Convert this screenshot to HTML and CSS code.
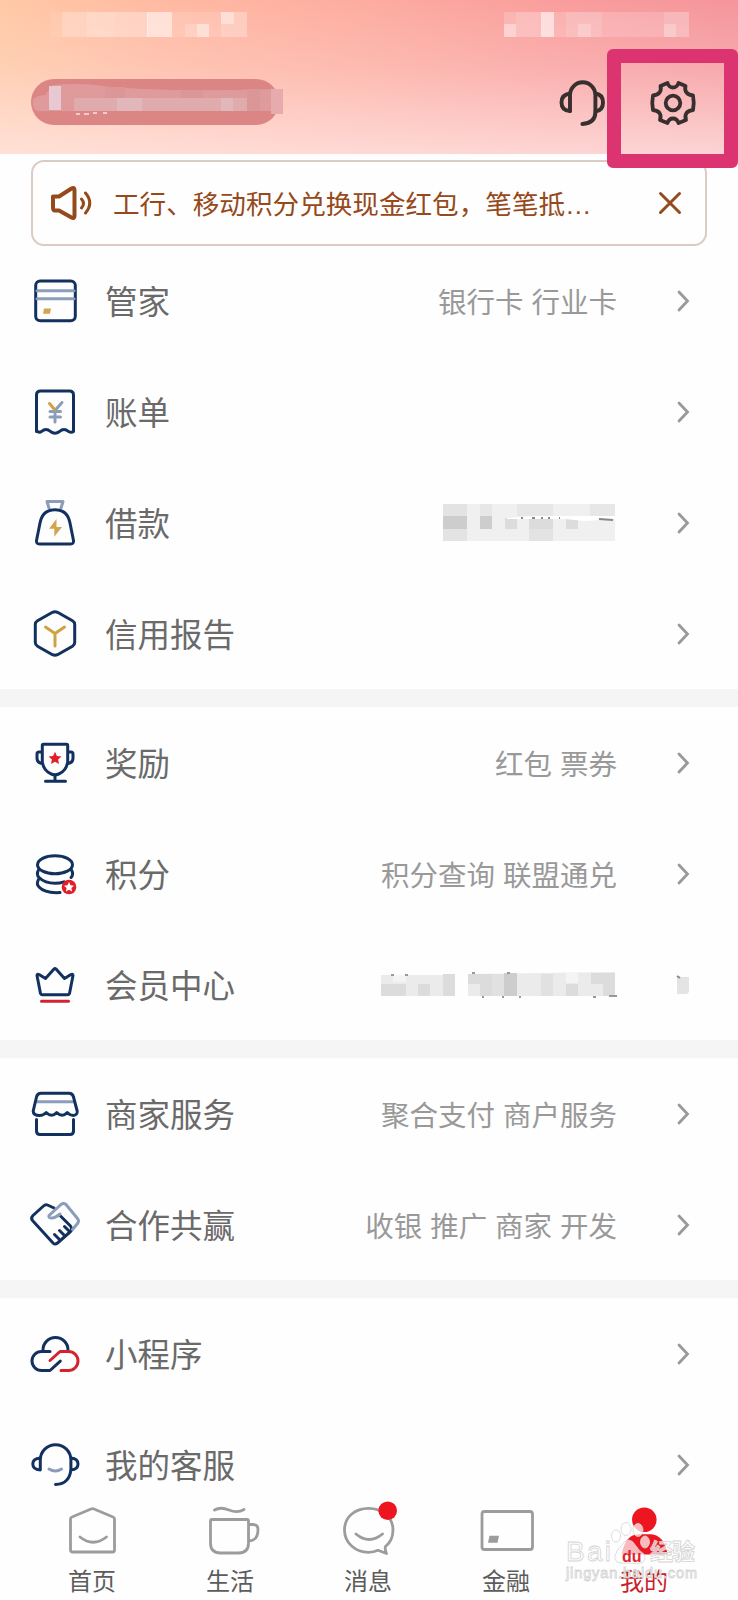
FILE: index.html
```html
<!DOCTYPE html>
<html lang="zh-CN">
<head>
<meta charset="utf-8">
<title>我的</title>
<link rel="stylesheet" href="styles.css">
</head>
<body>
<div class="app">
  <header class="header">
    <div class="status">
      <svg class="mosaic" width="200" height="26" viewBox="0 0 200 26">
        <g fill="#fff"><path opacity=".08" d="M0 0h65v25H0z"/><path opacity=".2" d="M12 0h86v25H12z"/><path opacity=".15" d="M37 0h61v25H37z"/><path opacity=".55" d="M97 0h25v25H97z"/><path opacity=".14" d="M122 0h75v25h-75z"/><path opacity=".35" d="M147 12h12v13h-12zM171 0h13v12h-13z"/><path opacity=".18" d="M135 12h24v13h-24zM171 0h26v25h-26z"/></g>
      </svg>
      <svg class="mosaic" width="186" height="26" viewBox="0 0 186 26">
        <g fill="#fff"><path opacity=".18" d="M0 0h185v25H0z"/><path opacity=".38" d="M0 12h12v13H0z"/><path opacity=".5" d="M37 0h13v25H37z"/><path opacity=".12" d="M12 0h38v25H12zM62 0h36v25H62zM160 0h25v25h-25z"/><path opacity=".22" d="M74 12h13v13H74zM160 12h12v13h-12z"/></g>
      </svg>
    </div>
    <div class="topbar">
      <div class="account">
        <svg class="account-mask" width="254" height="46" viewBox="0 0 254 46">
          <path fill="#df9a9b" d="M2 20q6-4 12-4L22 6q30-3 58 2 60 5 168 2v22H12Q0 34 2 20z"/>
          <path fill="#e0abad" d="M43 19h173v13H43z"/><path fill="#e8c9d2" d="M18 7h12v24H18z"/><path fill="#e2b7bb" d="M86 19h25v13H86zM190 19h12v13h-12z"/>
          <path fill="#db9697" d="M216 10h13v22h-13zM74 8h20v11H74zM150 11h22v8h-22z"/><path fill="#e8abad" d="M240 10h12v25h-12z"/>
          <path fill="none" stroke="#fbe3e2" stroke-width="1.3" d="M45 35h4m4 0h5m4-1h4m6 0h4"/>
        </svg>
      </div>
      <div class="top-actions">
        <svg class="top-icon" width="50" height="50" viewBox="0 0 50 50">
          <g fill="none" stroke="#38302e" stroke-width="3.900" stroke-linecap="round" stroke-linejoin="round"><path d="M13 33V17a12.700 12.700 0 0 1 25.400 0v17q0 11-13 12"/><path d="M13 15.500Q4.500 16.500 4.500 24.500T13 33M38.500 15.500q7.500 1 7.500 9t-7.500 9"/></g>
        </svg>
        <div class="settings">
          <svg class="top-icon" width="50" height="50" viewBox="0 0 50 50">
            <g fill="none" stroke="#38302e" stroke-width="3.800" stroke-linejoin="round"><path d="M19.500 5Q21 9.500 25 9.500Q29 9.500 30.500 5L37.500 8Q36.500 12.500 38.500 14.500Q40.500 17 45 17.500Q46.500 25 45 32Q40.500 32.500 38.500 35Q36.500 38 38 42L30.500 45Q29 40.500 25 40.500Q21 40.500 19.500 45L12 42Q13.500 38 11.500 35Q9.500 32.500 5 32Q3.500 25 5 17.500Q9.500 17 11.500 14.500Q13.500 12.500 12.500 8Z"/><circle cx="25" cy="25" r="7.300"/></g>
          </svg>
        </div>
      </div>
    </div>
  </header>

  <div class="notice">
    <svg class="notice-icon" width="44" height="36" viewBox="0 0 44 36">
      <g fill="none" stroke="#96491a" stroke-width="4" stroke-linejoin="round" stroke-linecap="round"><path d="M3 11.500h6L21.500 3.500q3-1.500 3 1.500v26q0 3-3 1.500L9 25.500H5q-2 0-2-3z"/><path stroke-width="3" d="M31.500 14q4 4.500 0 9M35.500 8q8.500 10 0 20"/></g>
    </svg>
    <p class="notice-text">工行、移动积分兑换现金红包，笔笔抵<span class="dots">…</span></p>
    <svg class="notice-close" width="24" height="24" viewBox="0 0 24 24"><path d="M2.500 2.500l19 19m0-19l-19 19" stroke="#96491a" stroke-width="3" stroke-linecap="round"/></svg>
  </div>

  <main class="list">
    <section class="group">
      <div class="row">
        <svg class="icon" viewBox="0 0 60 60"><rect class="navy" x="10.700" y="10.100" width="39.600" height="39.600" rx="4.500"/><path class="slate" d="M12 19.800h37M12 27.800h37"/><path class="gold-fill" d="M19 37.500h7l-1 5.300h-7z"/></svg>
        <span class="label">管家</span><span class="value">银行卡 行业卡</span>
        <svg class="chevron" viewBox="0 0 14 22"><path d="M3 2l8.500 9L3 20"/></svg>
      </div>
      <div class="row">
        <svg class="icon" viewBox="0 0 60 60"><path class="navy" d="M11.500 49.500V13q0-4 4-4h29q4 0 4 4v36.500q-2 1.500-5 0-4.500-4-9 0-4.500 3.500-9 0-4.500-4-9 0-2 1.500-4 0z"/><path class="slate" d="M30 29v11M25 29.500h10.500M25 35h10.500M30 28.500l7-8"/><path class="slate gold" d="M24.500 21.500l5 6"/></svg>
        <span class="label">账单</span>
        <svg class="chevron" viewBox="0 0 14 22"><path d="M3 2l8.500 9L3 20"/></svg>
      </div>
      <div class="row">
        <svg class="icon" viewBox="0 0 60 60"><path class="slate" d="M24 15l-2-6.500h16L36 15"/><path class="navy" d="M11.500 47.500L15 30Q17.500 16.800 30 16.800T45 30l3.500 17.500q.5 3.500-3 3.500h-31q-3.500 0-3-3.500z"/><path class="gold-fill" d="M31.500 26l-7.500 9.800h5.300v8L37 34h-5.500z"/></svg>
        <span class="label">借款</span>
        <span class="value">
          <svg class="mosaic-value" width="174" height="38" viewBox="0 0 174 38"><path fill="#f0f0f0" d="M0 0h172v37H0z"/><path fill="#e3e3e3" d="M0 0h24v37H0zM86 12h24v25H86z"/><path fill="#cdcdcd" d="M0 12h24v13H0zM37 12h12v13H37z"/><path fill="#dcdcdc" d="M62 14h12v11H62zM86 15h24v10H86zM123 13h12v12h-12z"/><path fill="#e7e7e7" d="M37 0h12v12H37zM74 0h36v12H74zM147 0h25v12h-25z"/><path fill="#fff" d="M64 14l28-2h80v3l-30 2-20-2H64z"/><path stroke="#888" stroke-width="2" d="M78 14h2m9 0h3m6 0h2m5 0h2m9 0h1m39 1l14 1"/></svg>
        </span>
        <svg class="chevron" viewBox="0 0 14 22"><path d="M3 2l8.500 9L3 20"/></svg>
      </div>
      <div class="row">
        <svg class="icon" viewBox="0 0 60 60"><path class="navy" d="M27.500 8.300q2.500-1.300 5 0l15 8.500q2.200 1.300 2.200 3.700v18q0 2.400-2.200 3.700l-15 8.500q-2.500 1.300-5 0l-15-8.500q-2.200-1.300-2.200-3.700v-18q0-2.400 2.200-3.700z"/><path class="slate gold" d="M20.500 23l9.500 6.500 9.500-6.500M30 29.500v12.500"/></svg>
        <span class="label">信用报告</span>
        <svg class="chevron" viewBox="0 0 14 22"><path d="M3 2l8.500 9L3 20"/></svg>
      </div>
    </section>

    <section class="group">
      <div class="row">
        <svg class="icon" viewBox="0 0 60 60"><path class="navy" d="M18.500 11.300h23q1.200 0 1.200 1.200V29q-1.500 9-9 12-3.700 1.500-7.400 0-7.500-3-9-12V12.500q0-1.200 1.200-1.200zM17 19h-3q-2 0-2 2v4q0 5 5.500 5.500M43 19h3q2 0 2 2v4q0 5-5.500 5.500M30 42v6M20.500 48.300h20"/><path class="red-fill" d="M30 18.800l1.900 4.200 4.600.5-3.400 3.100.9 4.500-4-2.300-4 2.300.9-4.500-3.400-3.100 4.600-.5z"/></svg>
        <span class="label">奖励</span><span class="value">红包 票券</span>
        <svg class="chevron" viewBox="0 0 14 22"><path d="M3 2l8.500 9L3 20"/></svg>
      </div>
      <div class="row">
        <svg class="icon" viewBox="0 0 60 60"><ellipse class="navy" cx="30" cy="20.700" rx="17.500" ry="9"/><path class="navy" d="M13.500 26q-2.500 4.500.5 7.500 6 5.800 16 5.800 5 0 9-1.500M46.500 26q2.500 4.500-.5 7.500M13.500 35.500q-2.500 4.500.5 7.500 6 6.500 21 5.500"/><circle class="red-fill" cx="44" cy="43" r="7.300"/><path fill="#fff" d="M44 38l1.500 3.300 3.500.4-2.600 2.400.7 3.500-3.100-1.800-3.100 1.800.7-3.500-2.600-2.400 3.500-.4z"/></svg>
        <span class="label">积分</span><span class="value">积分查询 联盟通兑</span>
        <svg class="chevron" viewBox="0 0 14 22"><path d="M3 2l8.500 9L3 20"/></svg>
      </div>
      <div class="row">
        <svg class="icon" viewBox="0 0 60 60"><path class="navy" d="M12 20.500q0-2 2-1l6.500 4 8.500-9.500q1-1 2 0l8.500 9.500 6.500-4q2-1 2 1l-3.500 18q-.3 1.200-1.500 1.200H17q-1.200 0-1.500-1.200z"/><path class="red" d="M16.500 46.300h27"/></svg>
        <span class="label">会员中心</span>
        <span class="value">
          <svg class="mosaic-value" width="236" height="28" viewBox="0 0 236 28"><path fill="#ebebeb" d="M0 4h74V25H0zM87 3l147-2v24H87z"/><path fill="#dcdcdc" d="M0 13h25v12H0zM37 13h12v12H37zM62 3h12v22H62zM87 3h24v10H87zM99 13h12v12H99zM185 13h12v12h-12zM210 2h24v11h-24zM222 13h12v12h-12z"/><path fill="#cdcdcd" d="M123 2h13v23h-13z"/><path fill="#e1e1e1" d="M111 3h12v22h-12zM160 3h12v22h-12z"/><path fill="#f4f4f4" d="M12 4h13v7H12zM185 2h12v10h-12z"/><path stroke="#999" stroke-width="2" d="M10 4h3m11 0h3m64-2h3m32 0h3m-28 24h2m18 0h2m15 0h2m72 0h3m13-1h8"/></svg>
        </span>
        <svg class="chevron-mask" width="14" height="20" viewBox="0 0 14 20"><path fill="#e4e4e4" d="M1 2h12v15l-2 2H1z"/><path stroke="#888" stroke-width="2" d="M1 1l3 2"/></svg>
      </div>
    </section>

    <section class="group">
      <div class="row">
        <svg class="icon" viewBox="0 0 60 60"><path class="slate" d="M12 17.700h37"/><path class="navy" d="M11.500 13q.8-3.700 4.500-3.700h28q3.700 0 4.500 3.700l3.700 14q.5 4-4 4.500-3 0-6-3-5 5.500-10.500 0-5 5.500-10.500 0-3 3-6.500 3-6.500 0-6.500-4.500zM11.500 35.500V47q0 3.500 3.500 3.500h30q3.500 0 3.500-3.500V35.500"/></svg>
        <span class="label">商家服务</span><span class="value">聚合支付 商户服务</span>
        <svg class="chevron" viewBox="0 0 14 22"><path d="M3 2l8.500 9L3 20"/></svg>
      </div>
      <div class="row">
        <svg class="icon" viewBox="0 0 60 60"><path class="navy" d="M29 13l-6.500-3q-2-1-4 1L8 20.500q-2.500 2.500-.5 5L28 48q2 2 4.500 0L45 37q3-2.500.5-6L35.500 21"/><path class="slate" d="M47.500 34.500l5-6q2-2.500 0-5L41 9.500q-2.500-2-5 0l-12 11q-1 2.500 3 2.500 3 0 8-4"/><path class="navy" d="M29.500 39.500l4.500 4.500M34.500 35.500l4.500 4.500M39.500 31.500l4.500 4.500"/></svg>
        <span class="label">合作共赢</span><span class="value">收银 推广 商家 开发</span>
        <svg class="chevron" viewBox="0 0 14 22"><path d="M3 2l8.500 9L3 20"/></svg>
      </div>
    </section>

    <section class="group">
      <div class="row">
        <svg class="icon" viewBox="0 0 60 60"><path class="navy" d="M18 26a12.500 12.500 0 0 1 25 0M25 27.500h-8.500a9.500 9.500 0 0 0 0 19H25l10.300-9.400"/><path class="red" d="M25 36.500l10-9h8.500a9.500 9.500 0 0 1 0 19h-7.500"/></svg>
        <span class="label">小程序</span>
        <svg class="chevron" viewBox="0 0 14 22"><path d="M3 2l8.500 9L3 20"/></svg>
      </div>
      <div class="row">
        <svg class="icon" viewBox="0 0 60 60"><path class="navy" d="M15.300 34.500V25a15.300 15.300 0 0 1 30.600 0v9q-1 15-15.400 15.500M15.300 23q-7.500.5-7.500 6t7.500 6zM46 23q7 .5 7 6t-7 6"/><path class="slate" d="M24 34q6.500 4 12.500 0"/></svg>
        <span class="label">我的客服</span>
        <svg class="chevron" viewBox="0 0 14 22"><path d="M3 2l8.500 9L3 20"/></svg>
      </div>
    </section>
  </main>

  <nav class="tabs">
    <a class="tab"><svg class="tab-icon" viewBox="0 0 60 60"><path d="M8.500 19q0-1.500 1.500-2L29 9q1.500-.6 3 0l19 8q1.500.5 1.500 2v31q0 2-2 2H10.500q-2 0-2-2zM18 37q13 10.500 26.500 0"/></svg><span>首页</span></a>
    <a class="tab"><svg class="tab-icon" viewBox="0 0 60 60"><path d="M12 19.500h35q1.500 0 1.500 1.500v22q0 10-10 10H20.500q-10 0-10-10V21q0-1.500 1.500-1.500zM49 24.500h4q5 0 5 5 0 11-9 11.500M14.500 10q6-3.500 14.500 0t15-.5"/></svg><span>生活</span></a>
    <a class="tab"><svg class="tab-icon" viewBox="0 0 60 60"><path d="M47.500 46.500q7.500-6 7.500-16.500C55 17 44 8.300 30.500 8.300S6.500 17 6.500 30s11 22.300 24 22.300q5.500 0 9.500-2l8.500 3.200q-2-5-1-7zM18 34q13 11 26.500 0"/><circle class="badge" cx="49.700" cy="10.700" r="9.300"/></svg><span>消息</span></a>
    <a class="tab"><svg class="tab-icon" viewBox="0 0 60 60"><rect x="6" y="11.500" width="50.500" height="38" rx="2.500"/><path class="grey-fill" d="M13.500 35.700h9.500l-1.500 7H12z"/></svg><span>金融</span></a>
    <a class="tab active"><svg class="tab-icon" viewBox="0 0 60 60"><circle class="badge" cx="30.300" cy="19.700" r="12.300"/><path class="badge" d="M7.700 54.500Q11 35 24 34.300h13Q50 35 53.700 54.500z"/></svg><span>我的</span></a>
  </nav>

  <svg class="watermark" width="140" height="70" viewBox="0 0 140 70">
    <g fill="#fff" fill-opacity=".7" stroke="#d4d4d4" stroke-width=".8">
      <text x="1" y="46" font-size="28" textLength="45">Bai</text>
      <ellipse cx="51" cy="21" rx="4.500" ry="6"/><ellipse cx="61" cy="14" rx="5" ry="6.500"/><ellipse cx="73" cy="15" rx="5" ry="6.500"/><ellipse cx="80" cy="27" rx="4.500" ry="6"/>
      <path d="M56 31q8-12 15 0 3 5 8 8 3 7-3 9-6 1-12 0-7 1-12-1-6-5 4-16z"/>
      <text x="85" y="45" font-size="23" font-weight="700" textLength="45">经验</text>
      <text x="1" y="63" font-size="14.500" textLength="131">jingyan.baidu.com</text>
    </g>
    <text x="57" y="47" font-size="16" font-weight="700" fill="#e2242c">du</text>
  </svg>
</div>
</body>
</html>
```
FILE: styles.css
```css
* { box-sizing: border-box; }

body {
  margin: 0;
  background: #fefefe;
  font-family: "Noto Sans CJK SC", sans-serif;
}

.app {
  position: relative;
  display: flex;
  flex-direction: column;
  width: 738px;
  height: 1600px;
  overflow: hidden;
}

.header {
  position: relative;
  z-index: 1;
  height: 154px;
  flex: none;
  padding-top: 12px;
  background:
    linear-gradient(to bottom, rgba(255, 238, 232, 0) 0%, rgba(254, 232, 230, .26) 45%, rgba(255, 234, 232, .74) 100%),
    linear-gradient(100deg, #ffc9a4 0%, #ffb9a2 22%, #fdac9f 48%, #f99c9c 75%, #f4949b 100%);
}

.status {
  display: flex;
  justify-content: space-between;
  padding: 0 48px 0 50px;
}

.mosaic, .mosaic-value { display: block; }

.topbar {
  display: flex;
  justify-content: space-between;
  align-items: flex-start;
  padding: 11px 0 0 31px;
}

.account {
  width: 248px;
  height: 46px;
  margin-top: 30px;
  border-radius: 23px;
  background: #dc8585;
}

.top-actions {
  display: flex;
  align-items: flex-start;
}

.top-actions > .top-icon { margin-top: 29px; }

.top-icon { display: block; flex: none; }

.settings {
  display: flex;
  justify-content: center;
  width: 131px;
  height: 119px;
  padding-top: 15px;
  border: 14px solid #dc3471;
  border-radius: 6px;
}

.settings .top-icon { margin-top: 0; }

.notice {
  display: flex;
  align-items: center;
  flex: none;
  height: 86px;
  margin: 6px 31px 0;
  padding: 0 23px 0 17px;
  border: 2px solid #dacbc3;
  border-radius: 13px;
  color: #96491a;
}

.notice-text {
  flex: 1;
  margin: 2px 0 0 19px;
  font-size: 26.600px;
  line-height: 40px;
  white-space: nowrap;
}

.dots { font-family: "Liberation Sans", sans-serif; }

.list {
  flex: 1;
  min-height: 0;
  overflow: hidden;
}

.group + .group { border-top: 18px solid #f5f5f5; }

.row {
  display: flex;
  align-items: center;
  height: 111px;
  padding: 0 48px 0 25px;
}

.group:first-child .row:first-child { height: 110px; }

.icon {
  width: 60px;
  height: 60px;
  flex: none;
  fill: none;
  stroke-width: 3;
  stroke-linecap: round;
  stroke-linejoin: round;
}

.navy { stroke: #12315f; }
.slate { stroke: #8c9dbb; }
.gold { stroke: #cda244; }
.red { stroke: #d3232e; }
.gold-fill { fill: #d2a650; }
.red-fill { fill: #e01f2b; }

.label {
  margin-left: 20px;
  padding-bottom: 2px;
  color: #6a6a6a;
  font-size: 32.500px;
  line-height: 48px;
}

.value {
  margin-left: auto;
  color: #999;
  font-size: 28.500px;
  line-height: 42px;
  word-spacing: 1.500px;
}

.chevron, .chevron-mask { flex: none; margin-left: auto; }

.value + .chevron, .value + .chevron-mask { margin-left: 59px; }

.chevron {
  width: 14px;
  height: 22px;
  fill: none;
  stroke: #999;
  stroke-width: 2.800;
  stroke-linecap: round;
}

.tabs {
  display: flex;
  flex: none;
  height: 100px;
  padding: 0 25px 0 23px;
  background: #fefefe;
}

.tab {
  display: flex;
  flex: 1;
  flex-direction: column;
  align-items: center;
  color: #5c5c5c;
  font-size: 24px;
  line-height: 39px;
}

.tab-icon {
  width: 60px;
  height: 60px;
  overflow: visible;
  fill: none;
  stroke: #9c9c9c;
  stroke-width: 2.800;
  stroke-linecap: round;
  stroke-linejoin: round;
}

.tab-icon .grey-fill { fill: #9c9c9c; stroke: none; }
.tab-icon .badge { fill: #ed1620; stroke: none; }
.tab.active { color: #c9212b; }

.watermark {
  position: absolute;
  left: 565px;
  top: 1515px;
  font-family: "Liberation Sans", "Noto Sans CJK SC", sans-serif;
}
```
